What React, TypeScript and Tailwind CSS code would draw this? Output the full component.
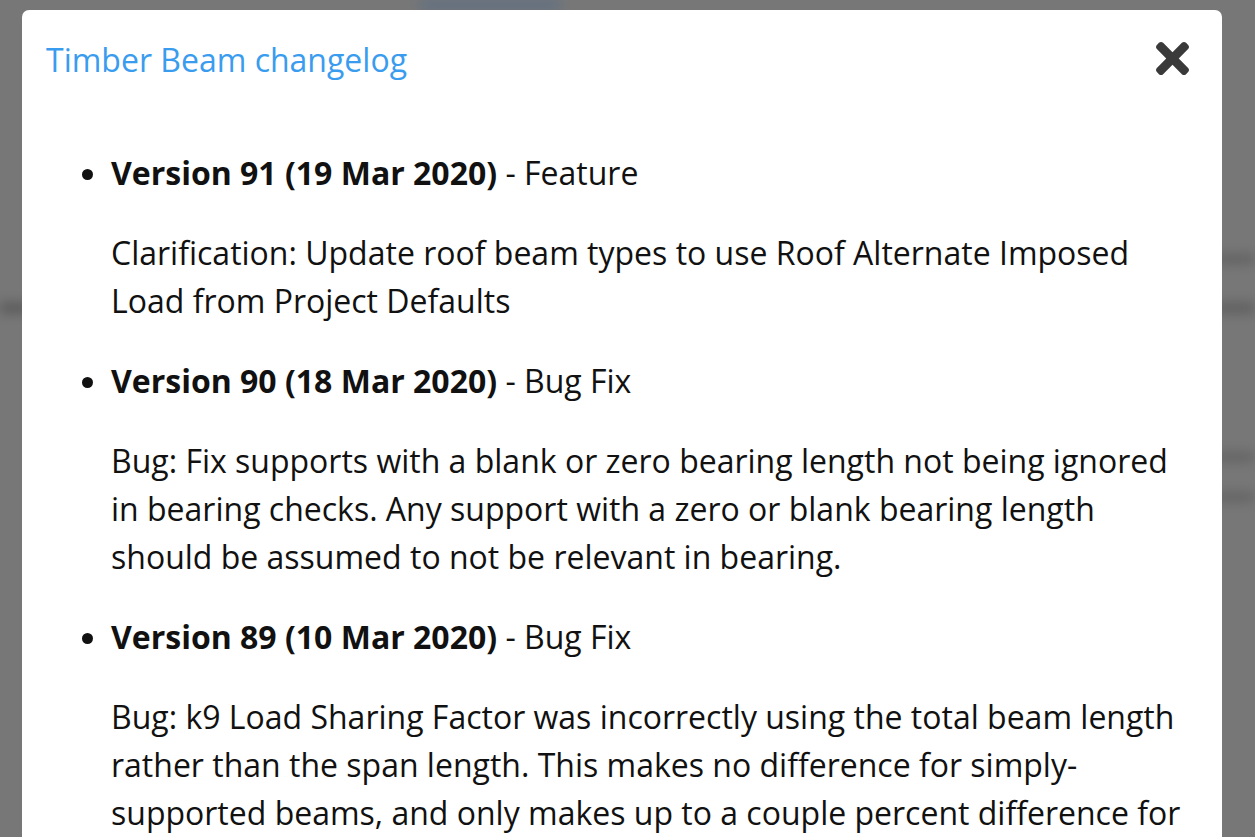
import React from "react";

type Entry = {
  version: string
  kind: string
  notes: string
}

const entries: Entry[] = [
  {
    version: "Version 91 (19 Mar 2020)",
    kind: "Feature",
    notes: "Clarification: Update roof beam types to use Roof Alternate Imposed Load from Project Defaults",
  },
  {
    version: "Version 90 (18 Mar 2020)",
    kind: "Bug Fix",
    notes: "Bug: Fix supports with a blank or zero bearing length not being ignored in bearing checks. Any support with a zero or blank bearing length should be assumed to not be relevant in bearing.",
  },
  {
    version: "Version 89 (10 Mar 2020)",
    kind: "Bug Fix",
    notes: "Bug: k9 Load Sharing Factor was incorrectly using the total beam length rather than the span length. This makes no difference for simply-supported beams, and only makes up to a couple percent difference for continuous beams.",
  },
];

function CloseIcon() {
  return (
    <svg viewBox="0 80 352 352" className="w-[33px] h-[33px]" fill="#3a3a3a">
      <path d="M242.72 256l100.07-100.07c12.28-12.28 12.28-32.19 0-44.48l-22.24-22.24c-12.28-12.28-32.19-12.28-44.48 0L176 189.28 75.930 89.21c-12.28-12.28-32.19-12.28-44.48 0L9.21 111.45c-12.28 12.28-12.28 32.19 0 44.48L109.28 256 9.21 356.07c-12.28 12.28-12.28 32.19 0 44.48l22.24 22.24c12.28 12.28 32.2 12.28 44.48 0L176 322.72l100.07 100.07c12.28 12.28 32.2 12.28 44.48 0l22.24-22.240c12.28-12.28 12.28-32.19 0-44.48L242.72 256z" />
    </svg>
  );
}

function Backdrop() {
  // the blurred page that sits behind the dialog
  return (
    <div className="flex flex-col h-full blur-[6px] opacity-90">
      <div className="h-[10px] flex">
        <div className="w-[420px]" />
        <div className="w-[140px] bg-[#5d6f85]" />
      </div>
      <div className="h-[245px]" />
      <div className="h-[8px] flex justify-end"><div className="w-[40px] bg-[#5a5a5a]" /></div>
      <div className="h-[40px]" />
      <div className="h-[10px] flex justify-between">
        <div className="w-[30px] bg-[#555]" />
        <div className="w-[40px] bg-[#5a5a5a]" />
      </div>
      <div className="h-[140px]" />
      <div className="h-[8px] flex justify-end"><div className="w-[40px] bg-[#5c5c5c]" /></div>
      <div className="h-[32px]" />
      <div className="h-[8px] flex justify-end"><div className="w-[40px] bg-[#5c5c5c]" /></div>
    </div>
  );
}

export default function App() {
  return (
    <div
      className="relative w-[1255px] h-[837px] overflow-hidden bg-[#777777]"
      style={{ fontFamily: '"Open Sans", "Noto Sans", sans-serif' }}
    >
      <Backdrop />
      <div className="absolute top-[10px] left-[22px] w-[1200px] h-[900px] bg-white rounded-[7px] px-[24px] pt-[29px]">
        <div className="flex items-start justify-between">
          <h2 className="text-[32px] leading-[42px] text-[#3a9cee]">Timber Beam changelog</h2>
          <button className="mt-[3px] mr-[9px]">
            <CloseIcon />
          </button>
        </div>
        <ul className="list-disc pl-[65px] mt-[68px] text-[32px] leading-[48px] text-[#111]">
          {entries.map(e => (
            <li key={e.version} className="mb-[32px]">
              <span className="font-bold">{e.version}</span> - {e.kind}
              <p className="mt-[32px]">{e.notes}</p>
            </li>
          ))}
        </ul>
      </div>
    </div>
  );
}
